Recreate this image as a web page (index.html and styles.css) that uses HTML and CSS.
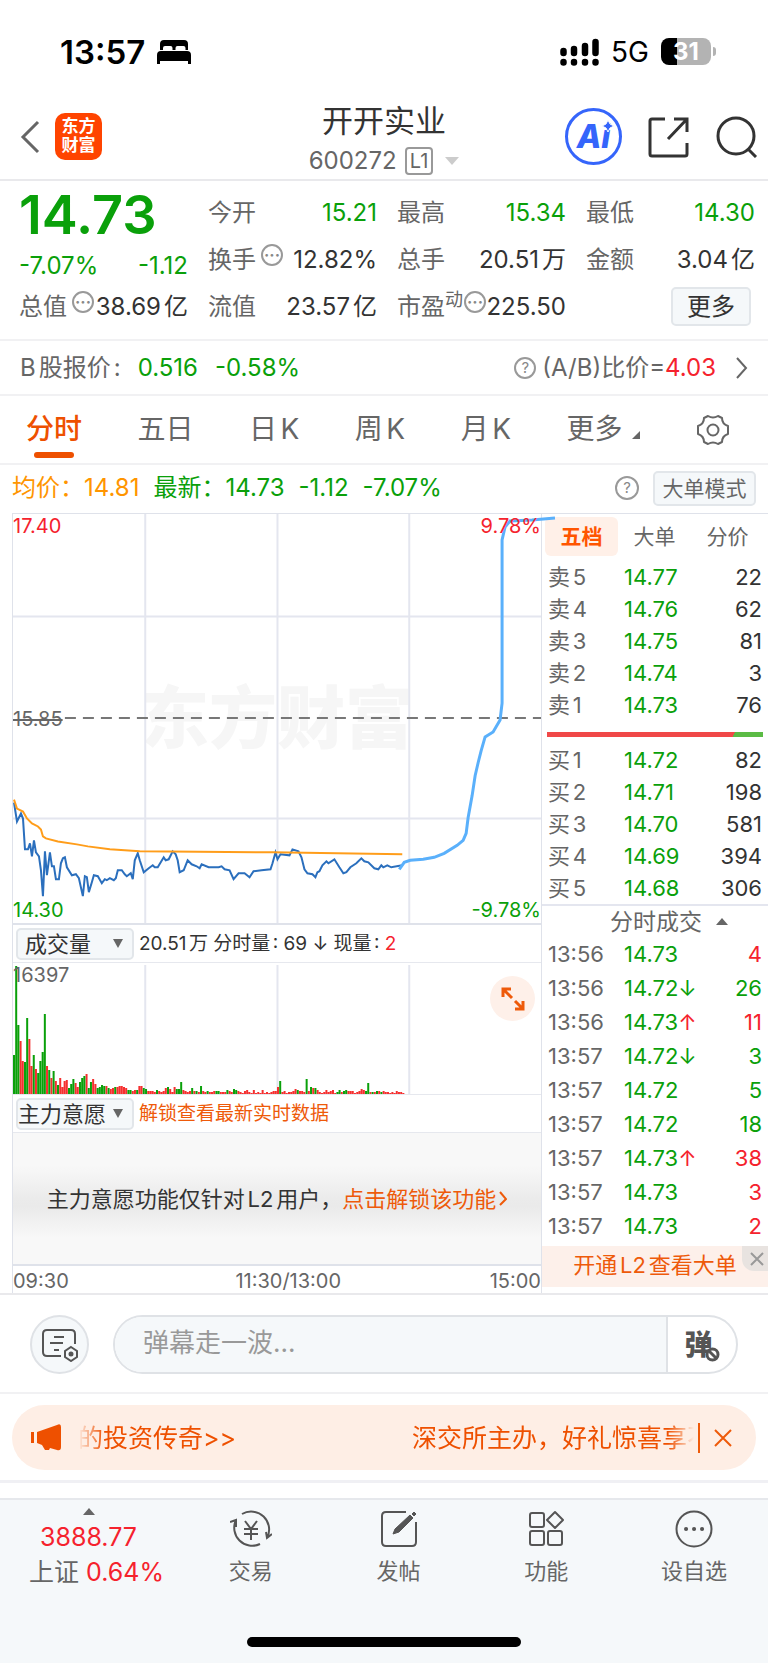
FILE: index.html
```html
<!DOCTYPE html>
<html lang="zh-CN">
<head>
    <meta charset="UTF-8">
    <meta name="viewport" content="width=device-width, initial-scale=1.0">
    <title>开开实业 600272</title>
    <link rel="stylesheet" href="styles.css">
</head>
<body>
    <div class="status-bar">
        <div class="status-left">
            <span class="clock">13:57</span>
            <svg width="34" height="26" viewBox="0 0 34 26"><path d="M3 11V5q0-4 4-4h20q4 0 4 4v6h-2.500V9q0-2-2-2h-6q-2 0-2 2v2h-3V9q0-2-2-2H8Q6 7 6 9v2zM0 25V16q0-4 4-4h26q4 0 4 4v9h-3v-3H3v3z"/></svg>
        </div>
        <div class="status-right">
            <svg width="39" height="28" viewBox="0 0 39 28"><path d="M3.500 13v2M14 11v4M25 8v7M35.500 4v11M3.500 24v.5M14 24v.5M25 24v.5M35.500 24v.5" stroke="#000" stroke-width="6.500" stroke-linecap="round"/></svg>
            <span class="network">5G</span>
            <span class="battery">31</span>
        </div>
    </div>

    <header class="header">
        <div class="header-left">
            <button class="icon-btn" aria-label="返回"><svg width="20" height="34" viewBox="0 0 20 34"><path d="M18 2 3 17l15 15" fill="none" stroke="#666" stroke-width="3"/></svg></button>
            <a class="brand" href="#">东方<br>财富</a>
        </div>
        <div class="header-title">
            <h1>开开实业</h1>
            <div class="code">600272 <span class="level">L1</span><i class="caret-down"></i></div>
        </div>
        <div class="header-right">
            <button class="icon-btn ai" aria-label="AI"><span>Ai</span><svg class="spark" width="14" height="14" viewBox="0 0 14 14"><path d="M7 1 9 5l4 2-4 2-2 4-2-4-4-2 4-2z" fill="#3565fb" stroke="#fff"/></svg></button>
            <button class="icon-btn" aria-label="分享"><svg width="42" height="42" viewBox="0 0 42 42" fill="none" stroke="#333" stroke-width="3"><path d="M17 3H4q-2 0-2 2v33q0 2 2 2h33q2 0 2-2V27M26 3h13v13M39 3 20 23"/></svg></button>
            <button class="icon-btn" aria-label="搜索"><svg width="42" height="42" viewBox="0 0 42 42" fill="none" stroke="#333" stroke-width="3"><circle cx="20" cy="20" r="18"/><path d="m32 33 8 8"/></svg></button>
        </div>
    </header>

    <section class="quote">
        <div class="price">14.73</div>
        <div class="cell"><span>今开</span><b class="green">15.21</b></div>
        <div class="cell"><span>最高</span><b class="green">15.34</b></div>
        <div class="cell"><span>最低</span><b class="green">14.30</b></div>
        <div class="cell change"><b class="green">-7.07%</b><b class="green">-1.12</b></div>
        <div class="cell"><span>换手<i class="dots">···</i></span><b>12.82%</b></div>
        <div class="cell"><span>总手</span><b>20.51万</b></div>
        <div class="cell"><span>金额</span><b>3.04亿</b></div>
        <div class="cell"><span>总值<i class="dots">···</i></span><b>38.69亿</b></div>
        <div class="cell"><span>流值</span><b>23.57亿</b></div>
        <div class="cell"><span>市盈<sup>动</sup><i class="dots">···</i></span><b>225.50</b></div>
        <div class="cell more"><button class="box-btn more-btn">更多</button></div>
    </section>

    <section class="b-share">
        <span>B股报价:</span>
        <span class="green">0.516</span>
        <span class="green">-0.58%</span>
        <a href="#" class="ratio"><i class="help">?</i><span>(A/B)比价=<em class="red">4.03</em></span><svg width="12" height="22" viewBox="0 0 12 22"><path d="m1 1 9 10-9 10" fill="none" stroke="#666" stroke-width="2"/></svg></a>
    </section>

    <nav class="tabs">
        <a href="#" class="active">分时</a>
        <a href="#">五日</a>
        <a href="#">日K</a>
        <a href="#">周K</a>
        <a href="#">月K</a>
        <a href="#" class="corner">更多</a>
        <button class="icon-btn" aria-label="设置"><svg width="34" height="32" viewBox="0 0 34 32" fill="none" stroke="#666" stroke-width="2"><path d="M12 2q5 3 10 0l4 2q0 6 6 8v8q-6 2-6 8l-4 2q-5-3-10 0l-4-2q0-6-6-8v-8q6-2 6-8z" stroke-linejoin="round"/><circle cx="17" cy="16" r="5.500"/></svg></button>
    </nav>

    <div class="summary">
        <span class="orange">均价：14.81</span>
        <span class="green">最新：14.73</span>
        <span class="green">-1.12</span>
        <span class="green">-7.07%</span>
        <i class="help">?</i>
        <button class="box-btn mode-btn">大单模式</button>
    </div>

    <main class="board">
        <div class="charts">
            <div class="price-chart">
                <div class="watermark">东方财富</div>
                <svg class="plot" viewBox="0 0 529 411" preserveAspectRatio="none">
                    <path class="grid" d="M132.500 0v411M265 0v411M397 0v411M0 103h529M0 306h529"/>
                    <path class="base" d="M52 205h477"/>
                    <polyline class="line-price" points="1,290 4,309 8,301 10,306 12,337 15,337 17,331 19,344 21,328 23,340 26,344 28,358 30,384 32,339 34,363 37,340 39,354 41,354 43,367 46,367 48,351 50,346 52,345 54,355 59,363 63,362 66,366 70,384 72,364 74,365 76,380 79,370 81,363 85,364 89,371 92,367 94,368 97,366 101,368 103,366 105,358 109,358 112,362 114,364 118,361 120,367 122,348 125,341 127,348 131,360 136,356 140,353 142,355 145,355 151,345 153,348 156,347 160,339 163,342 165,348 167,360 171,358 175,348 179,352 184,354 187,356 189,352 196,355 206,355 209,354 212,357 217,358 221,367 226,361 232,361 237,365 241,359 249,358 258,357 260,351 263,340 265,347 268,342 277,343 280,337 286,339 289,345 292,357 295,361 300,362 303,365 305,360 307,359 310,353 314,349 316,351 322,347 327,355 331,361 334,360 338,355 344,351 349,346 352,349 356,350 362,356 366,357 369,353 371,355 375,353 379,355 390,353"/>
                    <polyline class="line-avg" points="1,287 4,296 10,299 14,306 19,311 25,314 28,317 30,324 33,326 45,329 64,332 75,334 97,337 127,339 260,340 390,342"/>
                    <path class="line-hand" d="M387 357 392 350 398 348 411 347 422 345 432 341 445 333 451 328 454 321 456 305 460 283 463 263 466 250 469 238 473 224 481 219 488 207 490 190 490 126 490 26 493 13 498 7 520 6 543 4"/>
                </svg>
                <span class="mark top-left red">17.40</span>
                <span class="mark top-right red">9.78%</span>
                <span class="mark middle">15.85</span>
                <span class="mark bottom-left green">14.30</span>
                <span class="mark bottom-right green">-9.78%</span>
            </div>
            <div class="toolbar">
                <select class="picker" aria-label="指标一"><option>成交量</option></select>
                <span>20.51万 分时量: 69 ↓ 现量: <em class="red">2</em></span>
            </div>
            <div class="volume-chart">
                <svg class="plot" viewBox="0 0 529 131" preserveAspectRatio="none">
                    <path class="grid" d="M132.500 2v129M265 2v129M397 2v129"/>
                    <path id="volumeUp" fill="#f52f2f"/>
                    <path id="volumeDown" fill="#0aa00a"/>
                </svg>
                <span class="mark top-left">16397</span>
                <button class="icon-btn expand" aria-label="放大"><svg width="24" height="24" viewBox="0 0 24 24" fill="none" stroke="#ee5a0a" stroke-width="3"><path d="M10 2H2v8M2 2l9 9M14 22h8v-8M22 22l-8-8"/></svg></button>
            </div>
            <div class="toolbar">
                <select class="picker wide" aria-label="指标二"><option>主力意愿</option></select>
                <a href="#" class="unlock">解锁查看最新实时数据</a>
            </div>
            <div class="locked">主力意愿功能仅针对L2用户，<a href="#">点击解锁该功能<svg width="8" height="15" viewBox="0 0 8 15"><path d="m1 1 6 7-6 6" fill="none" stroke="#ee5a0a" stroke-width="2"/></svg></a></div>
            <div class="axis"><span>09:30</span><span>11:30/13:00</span><span>15:00</span></div>
        </div>

        <aside class="depth">
            <div class="depth-tabs">
                <button class="active">五档</button>
                <button>大单</button>
                <button>分价</button>
            </div>
            <table class="orders">
                <tr><th>卖5</th><td class="green">14.77</td><td>22</td></tr>
                <tr><th>卖4</th><td class="green">14.76</td><td>62</td></tr>
                <tr><th>卖3</th><td class="green">14.75</td><td>81</td></tr>
                <tr><th>卖2</th><td class="green">14.74</td><td>3</td></tr>
                <tr><th>卖1</th><td class="green">14.73</td><td>76</td></tr>
            </table>
            <div class="balance"></div>
            <table class="orders">
                <tr><th>买1</th><td class="green">14.72</td><td>82</td></tr>
                <tr><th>买2</th><td class="green">14.71</td><td>198</td></tr>
                <tr><th>买3</th><td class="green">14.70</td><td>581</td></tr>
                <tr><th>买4</th><td class="green">14.69</td><td>394</td></tr>
                <tr><th>买5</th><td class="green">14.68</td><td>306</td></tr>
            </table>
            <button class="deals-title">分时成交<i class="caret-up"></i></button>
            <table class="orders deals">
                <tr><th>13:56</th><td class="green">14.73</td><td class="red">4</td></tr>
                <tr><th>13:56</th><td class="green">14.72<i>↓</i></td><td class="green">26</td></tr>
                <tr><th>13:56</th><td class="green">14.73<i class="red">↑</i></td><td class="red">11</td></tr>
                <tr><th>13:57</th><td class="green">14.72<i>↓</i></td><td class="green">3</td></tr>
                <tr><th>13:57</th><td class="green">14.72</td><td class="green">5</td></tr>
                <tr><th>13:57</th><td class="green">14.72</td><td class="green">18</td></tr>
                <tr><th>13:57</th><td class="green">14.73<i class="red">↑</i></td><td class="red">38</td></tr>
                <tr><th>13:57</th><td class="green">14.73</td><td class="red">3</td></tr>
                <tr><th>13:57</th><td class="green">14.73</td><td class="red">2</td></tr>
            </table>
            <div class="promo">
                <a href="#">开通L2查看大单</a>
                <button class="promo-close" aria-label="关闭"><svg width="14" height="14" viewBox="0 0 14 14"><path d="m1 1 12 12M13 1 1 13" stroke="#999" stroke-width="2"/></svg></button>
            </div>
        </aside>
    </main>

    <section class="barrage">
        <button class="round-btn" aria-label="弹幕设置"><svg width="38" height="34" viewBox="0 0 38 34" fill="none" stroke="#555" stroke-width="2"><path d="M20 28H6q-4 0-4-4V6q0-4 4-4h24q4 0 4 4v10M13 9h10M9 15h13M13 22h5"/><path d="m30 19 6 4v6l-6 4-6-4v-6z"/><circle cx="30" cy="26" r="1.500" fill="#555"/></svg></button>
        <div class="barrage-box">
            <input type="text" placeholder="弹幕走一波..." aria-label="弹幕">
            <button class="barrage-off" aria-label="关闭弹幕"><span>弹</span><svg width="15" height="15" viewBox="0 0 15 15" fill="#fff" stroke="#555" stroke-width="3"><circle cx="7.500" cy="7.500" r="5.500"/><path d="m4 4 7 7"/></svg></button>
        </div>
    </section>

    <section class="notice-wrap">
        <div class="notice">
            <svg width="31" height="27" viewBox="0 0 31 27" fill="#ee5000"><path d="M0 8h3v11H0zM6 8 26 1q4-2 4 2v20q0 4-4 3l-7-2-1 2h-4l-3-5-5-2z"/></svg>
            <div class="marquee"><span>的投资传奇&gt;&gt;</span><span>深交所主办，好礼惊喜享不</span></div>
            <button class="icon-btn" aria-label="关闭公告"><svg width="18" height="18" viewBox="0 0 18 18"><path d="m1 1 16 16M17 1 1 17" stroke="#ee5a0a" stroke-width="2"/></svg></button>
        </div>
    </section>

    <footer class="dock">
        <nav class="dock-items">
            <a href="#" class="index"><i class="caret-up"></i><span class="red">3888.77</span><span>上证 <em class="red">0.64%</em></span></a>
            <a href="#"><svg width="42" height="38" viewBox="0 0 42 38" fill="none" stroke="#555" stroke-width="2"><path d="M12 4a18 18 0 0 1 25 24M30 34A18 18 0 0 1 6 10M0 12l6-2v7M42 24l-5 4-1-6M15 11l6 8 6-8M21 19v11M14 19h14M14 24h14"/></svg>交易</a>
            <a href="#"><svg width="38" height="38" viewBox="0 0 38 38" fill="none" stroke="#555" stroke-width="2"><path d="M26 2H6Q2 2 2 6v26q0 4 4 4h26q4 0 4-4V12"/><path d="m13 24 2-5L30 5l3 3-14 14zM32 4l2-2 2 2-2 2z" fill="#555" stroke-width="1"/></svg>发帖</a>
            <a href="#"><svg width="36" height="38" viewBox="0 0 36 38" fill="none" stroke="#555" stroke-width="2"><rect x="2" y="3" width="14" height="14" rx="2"/><rect x="2" y="21" width="14" height="14" rx="2"/><rect x="20" y="21" width="14" height="14" rx="2"/><path d="m27 2 8 8-8 8-8-8z" stroke-linejoin="round"/></svg>功能</a>
            <a href="#"><svg width="38" height="38" viewBox="0 0 38 38" fill="none" stroke="#555" stroke-width="2"><circle cx="19" cy="19" r="17.500"/><path d="M11 19h.1M19 19h.1M27 19h.1" stroke-width="4" stroke-linecap="round"/></svg>设自选</a>
        </nav>
        <div class="home-bar"></div>
    </footer>

    <script>
        // one bar per minute, negative = price fell
        const volume = [
            -39, -128, -69, 53, 33, -32, -76, 55, 28, -39, 25, -21, -33, -42, -80, 28, -24, 16, -23, 13,
            -9, 16, 7, 13, 14, -6, -10, -15, 11, 7, -12, -16, -18, 20, -6, -12, 15, 10, -6, -7,
            -9, -8, 8, -6, 5, 6, -7, 7, 8, 8, 7, 6, -4, -4, 3, 4, -4, 8, 8, -6,
            -5, 3, 3, 3, 2, -4, 3, 2, 3, 6, -7, 5, 2, 7, -5, -5, -12, 4, 3, 2,
            3, -6, 3, -3, 2, -8, 3, 2, -3, 2, 2, 3, -3, -3, 2, 2, 2, -4, 3, 2,
            -5, -4, 3, 2, 1, 3, 4, 2, 1, 4, 1, 2, 1, 4, 1, 2, 1, 2, 3, 3,
            7, -13, 2, 3, 1, 2, 2, 3, 5, -4, 3, 3, 2, -15, 3, -7, 6, -6, 4, 2,
            1, 2, 4, 2, 3, 4, 1, -2, -4, 2, -3, -4, 3, 3, 3, 1, 2, 3, 5, 4,
            -3, -11, 2, -2, 2, -3, 3, -2, 3, 2, 2, 1, 2, 1, 3, 2, 2, 1
        ];

        function bars(list, sign) {
            return list.map((v, i) => {
                if (Math.sign(v) !== sign) return '';
                const x = (i * 529 / 240).toFixed(1);
                return `M${x} 131v${-Math.abs(v)}h2v${Math.abs(v)}z`;
            }).join('');
        }

        document.getElementById('volumeUp').setAttribute('d', bars(volume, 1));
        document.getElementById('volumeDown').setAttribute('d', bars(volume, -1));
    </script>
</body>
</html>
```
FILE: styles.css
```css
* {
    box-sizing: border-box;
}

body {
    margin: 0;
    background-color: #fff;
    color: #666;
    font-family: Inter, "Noto Sans CJK SC", sans-serif;
    font-size: 24px;
    line-height: 32px;
    text-autospace: normal;
}

button,
input,
select {
    font: inherit;
    color: inherit;
    margin: 0;
    padding: 0;
    border: none;
    background: none;
}

a {
    color: inherit;
    text-decoration: none;
}

i,
em {
    font-style: normal;
}

svg {
    display: block;
    flex-shrink: 0;
}

.green,
.cell .green,
.orders .green {
    color: #0aa00a;
}

.red,
.orders .red {
    color: #f5222d;
}

.orange {
    color: #ff9500;
}

.icon-btn {
    display: flex;
    align-items: center;
    justify-content: center;
}

.caret-down,
.caret-up {
    display: inline-block;
    border: 7px solid transparent;
}

.caret-down {
    border-top: 8px solid #ccc;
    border-bottom: 0;
}

.caret-up {
    border-width: 0 6px 7px;
    border-bottom-color: #666;
}

/* status bar */
.status-bar {
    display: flex;
    justify-content: space-between;
    align-items: center;
    height: 94px;
    padding: 9px 57px 0 60px;
    color: #000;
}

.status-left,
.status-right {
    display: flex;
    align-items: center;
    gap: 12px;
}

.clock {
    font-size: 33px;
    font-weight: 600;
}

.network {
    font-size: 28px;
}

.battery {
    position: relative;
    width: 50px;
    height: 27px;
    border-radius: 8px;
    background: linear-gradient(to right, #000 31%, #b3b3b3 31%);
    color: #fff;
    font-size: 24px;
    font-weight: 700;
    line-height: 27px;
    text-align: center;
}

.battery::after {
    content: "";
    position: absolute;
    left: 52px;
    top: 9px;
    width: 3px;
    height: 9px;
    border-radius: 0 4px 4px 0;
    background-color: #b3b3b3;
}

/* header */
.header {
    display: grid;
    grid-template-columns: minmax(0, 1fr) auto minmax(0, 1fr);
    align-items: center;
    height: 87px;
    padding: 0 10px;
    border-bottom: 2px solid #e9e9ec;
}

.header-left,
.header-right {
    display: flex;
    align-items: center;
}

.header-left {
    gap: 15px;
    padding-left: 10px;
}

.header-right {
    justify-content: flex-end;
    gap: 26px;
}

.brand {
    width: 47px;
    height: 47px;
    padding-top: 4px;
    border-radius: 10px;
    background-color: #ff4400;
    color: #fff;
    font-size: 17px;
    font-weight: 700;
    line-height: 19px;
    text-align: center;
}

.header-title {
    padding-top: 4px;
    text-align: center;
}

h1 {
    margin: 0 0 4px;
    color: #333;
    font-size: 31px;
    font-weight: 400;
    line-height: 40px;
}

.code {
    display: flex;
    align-items: center;
    gap: 8px;
}

.level {
    padding: 0 3px;
    border: 2px solid #999;
    border-radius: 4px;
    font-size: 20px;
    line-height: 24px;
}

.code .caret-down {
    margin-left: 4px;
}

.ai {
    position: relative;
    width: 57px;
    height: 57px;
    border: 3px solid #3565fb;
    border-radius: 50%;
    color: #3565fb;
    font-size: 32px;
    font-style: italic;
    font-weight: 800;
}

.spark {
    position: absolute;
    right: 4px;
    top: 8px;
}

/* quote */
.quote {
    display: grid;
    grid-template-columns: repeat(4, 1fr);
    grid-auto-rows: 47px;
    column-gap: 20px;
    padding: 8px 13px 9px 19px;
    border-bottom: 2px solid #f1f1f3;
}

.price {
    align-self: center;
    padding-top: 4px;
    color: #0aa00a;
    font-size: 54px;
    font-weight: 600;
}

.cell {
    display: flex;
    align-items: center;
    justify-content: space-between;
    white-space: nowrap;
}

.cell b {
    color: #333;
    font-weight: 400;
}

.cell.change {
    padding-top: 12px;
}

.cell span {
    display: flex;
}

.cell sup {
    font-size: 18px;
    line-height: 18px;
}

.dots {
    width: 22px;
    height: 22px;
    margin-left: 5px;
    border: 2px solid #999;
    border-radius: 50%;
    color: #888;
    font-size: 16px;
    font-weight: 700;
    line-height: 18px;
    text-align: center;
}

.cell sup + .dots {
    margin-left: 1px;
}

.cell.more {
    justify-content: flex-end;
    padding-right: 4px;
}

.box-btn {
    border: 2px solid #e2e6ea;
    border-radius: 5px;
    background-color: #f5f8fa;
}

.more-btn {
    width: 80px;
    height: 39px;
    color: #333;
}

/* b share */
.b-share {
    display: flex;
    align-items: center;
    gap: 17px;
    height: 55px;
    padding: 0 20px;
    border-bottom: 2px solid #f1f1f3;
}

.ratio {
    display: flex;
    align-items: center;
    margin-left: auto;
}

.ratio svg {
    margin-left: 20px;
}

.help {
    width: 22px;
    height: 22px;
    border: 2px solid #999;
    border-radius: 50%;
    color: #888;
    font-size: 15px;
    line-height: 18px;
    text-align: center;
}

.ratio .help {
    margin-right: 6px;
}

/* period tabs */
.tabs {
    display: flex;
    justify-content: space-between;
    height: 69px;
    padding: 0 38px 0 26px;
    border-bottom: 2px solid #f1f1f3;
    font-size: 28px;
    line-height: 67px;
}

.tabs .active {
    position: relative;
    color: #ee5000;
    font-weight: 500;
}

.tabs .active::after {
    content: "";
    position: absolute;
    left: 50%;
    bottom: 5px;
    width: 40px;
    height: 6px;
    margin-left: -20px;
    border-radius: 3px;
    background-color: #ee5000;
}

.tabs .corner::after {
    content: "";
    display: inline-block;
    margin-left: 10px;
    border-left: 8px solid transparent;
    border-bottom: 8px solid #666;
}

/* summary */
.summary {
    display: flex;
    align-items: center;
    gap: 14px;
    height: 48px;
    padding: 0 12px 2px;
}

.summary .help {
    width: 24px;
    height: 24px;
    margin-left: auto;
    line-height: 20px;
}

.mode-btn {
    width: 103px;
    height: 35px;
    font-size: 21px;
}

/* board */
.board {
    display: grid;
    grid-template-columns: minmax(0, 530fr) minmax(0, 226fr);
    padding-left: 12px;
    border-bottom: 2px solid #e9e9ec;
}

.charts {
    border: 1px solid #dfe2ea;
    border-bottom: 0;
    font-size: 20px;
}

.price-chart,
.volume-chart {
    position: relative;
    border-bottom: 2px solid #dfe2ea;
}

.price-chart {
    height: 411px;
}

.volume-chart {
    height: 132px;
    border-bottom: 1px solid #e6e8ee;
}

.plot {
    position: relative;
    width: 100%;
    height: 100%;
    overflow: visible;
    z-index: 1;
}

.plot .grid,
.plot .base,
.line-price,
.line-avg,
.line-hand {
    fill: none;
    stroke-width: 2;
    vector-effect: non-scaling-stroke;
}

.plot .grid {
    stroke: #e4e6ef;
}

.plot .base {
    stroke: #777;
    stroke-dasharray: 11 7;
}

.line-price {
    stroke: #2b6fbd;
}

.line-avg {
    stroke: #ff9d1a;
}

.line-hand {
    stroke: #5ab0fb;
    stroke-width: 3;
}

.watermark {
    position: absolute;
    left: 0;
    right: 0;
    top: 160px;
    color: #f6f6f6;
    font-size: 68px;
    font-weight: 900;
    line-height: 88px;
    text-align: center;
}

.mark {
    position: absolute;
    z-index: 1;
    line-height: 24px;
}

.top-left {
    left: 0;
    top: 0;
}

.top-right {
    right: 0;
    top: 0;
}

.middle {
    left: 0;
    top: 193px;
    text-decoration: line-through;
}

.bottom-left {
    left: 0;
    bottom: 1px;
}

.bottom-right {
    right: 0;
    bottom: 1px;
}

.expand {
    position: absolute;
    right: 6px;
    top: 13px;
    z-index: 1;
    width: 45px;
    height: 45px;
    border-radius: 50%;
    background-color: #fef0e9;
}

.toolbar {
    display: flex;
    align-items: center;
    gap: 5px;
    height: 38px;
    padding-left: 3px;
    border-bottom: 1px solid #e6e8ee;
    color: #333;
    font-size: 19px;
}

.picker {
    width: 118px;
    height: 32px;
    padding-left: 7px;
    border: 2px solid #e2e6ea;
    border-radius: 5px;
    appearance: none;
    background: #f5f8fa url("data:image/svg+xml,%3Csvg xmlns='http://www.w3.org/2000/svg' width='10' height='9'%3E%3Cpath d='M0 0h10L5 9z' fill='%23666'/%3E%3C/svg%3E") no-repeat right 9px center;
    font-size: 22px;
    line-height: 28px;
}

.picker.wide {
    padding-left: 0;
}

.unlock,
.locked a {
    color: #ee5a0a;
}

.locked {
    display: flex;
    align-items: center;
    justify-content: center;
    height: 133px;
    border-bottom: 2px solid #dfe2ea;
    background: linear-gradient(#f8f8f8 25%, #ebebeb 50%, #eaeaea 56%, #f8f8f8 80%);
    color: #333;
    font-size: 22px;
    white-space: nowrap;
}

.locked a {
    display: flex;
    align-items: center;
    gap: 3px;
}

.axis {
    display: flex;
    justify-content: space-between;
    height: 27px;
    line-height: 30px;
}

.axis span:nth-child(2) {
    margin-left: 18px;
}

/* depth */
.depth {
    border-top: 1px solid #dfe2ea;
    font-size: 22px;
}

.depth-tabs {
    display: grid;
    grid-template-columns: repeat(3, 1fr);
    height: 47px;
    padding: 3px 4px 5px 3px;
}

.depth-tabs button {
    border-radius: 6px;
    font-size: 21px;
}

.depth-tabs .active {
    background-color: #fff0e8;
    color: #ff5500;
    font-weight: 700;
}

.orders {
    width: 100%;
    border-collapse: collapse;
    table-layout: fixed;
}

.orders tr {
    height: 32px;
}

.orders th,
.orders td {
    padding: 0;
    line-height: 32px;
}

.orders th {
    width: 82px;
    padding-left: 6px;
    font-weight: 400;
    text-align: left;
}

.orders td {
    color: #333;
}

.orders td:last-child {
    width: 60px;
    padding-right: 6px;
    text-align: right;
}

.balance {
    height: 5px;
    margin: 11px 5px 7px;
    background: linear-gradient(120deg, #f04848 86%, #5bbb45 86%);
}

.deals-title {
    display: flex;
    align-items: center;
    justify-content: center;
    gap: 14px;
    width: 100%;
    height: 33px;
    padding-left: 28px;
    border-top: 2px solid #e4e6ef;
    font-size: 23px;
}

.deals {
    margin-bottom: 3px;
}

.deals tr {
    height: 34px;
}

.promo {
    position: relative;
    height: 41px;
    background-color: #fdf0ea;
    color: #ee5a0a;
    line-height: 38px;
    text-align: center;
}

.promo-close {
    position: absolute;
    right: 0;
    top: 0;
    width: 26px;
    height: 25px;
    padding-left: 8px;
    border-radius: 0 0 0 12px;
    background-color: #e8e3e0;
}

/* barrage */
.barrage {
    display: flex;
    gap: 24px;
    padding: 20px 30px 18px;
    border-bottom: 2px solid #f1f1f3;
}

.round-btn {
    display: flex;
    align-items: center;
    justify-content: center;
    width: 59px;
    height: 59px;
    border: 2px solid #dfe2e6;
    border-radius: 50%;
    background-color: #f5f8fa;
}

.barrage-box {
    display: flex;
    flex: 1;
    overflow: hidden;
    border: 2px solid #dfe2e6;
    border-radius: 30px;
}

.barrage-box input {
    flex: 1;
    min-width: 0;
    padding: 0 28px 4px;
    background-color: #f5f8fa;
    font-size: 26px;
    text-autospace: no-autospace;
}

.barrage-box input::placeholder {
    color: #999;
}

.barrage-off {
    display: flex;
    align-items: center;
    justify-content: center;
    width: 70px;
    border-left: 2px solid #dfe2e6;
    color: #555;
    font-size: 28px;
    font-weight: 900;
}

.barrage-off svg {
    align-self: flex-end;
    margin: 0 0 10px -8px;
}

/* notice */
.notice-wrap {
    padding: 11px 12px 10px;
    border-bottom: 3px solid #f0f0f4;
}

.notice {
    display: flex;
    align-items: center;
    height: 65px;
    padding: 0 24px 0 19px;
    border-radius: 33px;
    background-color: #feeee5;
    color: #ee5000;
    font-size: 25px;
}

.marquee {
    display: flex;
    flex: 1;
    gap: 176px;
    min-width: 0;
    height: 30px;
    margin: 0 14px 0 16px;
    overflow: hidden;
    border-right: 2px solid #ee5a0a;
    line-height: 30px;
    white-space: nowrap;
    -webkit-mask-image: linear-gradient(to right, transparent 0, #000 26px);
    mask-image: linear-gradient(to right, transparent 0, #000 26px);
}

.marquee span:last-child {
    overflow: hidden;
    padding-right: 6px;
    -webkit-mask-image: linear-gradient(to left, transparent 4px, #000 30px);
    mask-image: linear-gradient(to left, transparent 4px, #000 30px);
}

/* dock */
.dock {
    margin-top: 15px;
    padding-bottom: 16px;
    border-top: 2px solid #e6e8ec;
    background-color: #f5f8fa;
}

.dock-items {
    display: grid;
    grid-template-columns: 177px repeat(4, 1fr);
    height: 137px;
}

.dock-items a {
    display: flex;
    flex-direction: column;
    align-items: center;
    gap: 7px;
    padding-top: 10px;
    font-size: 22px;
}

.dock-items .index {
    gap: 3px;
    padding: 8px 0 0 16px;
    font-size: 25px;
}

.dock-items .index .red:nth-child(2) {
    padding-right: 16px;
}

.dock-items .index .caret-up {
    margin: 0 16px 3px 0;
}

.home-bar {
    width: 274px;
    height: 10px;
    margin: 0 auto;
    border-radius: 5px;
    background-color: #000;
}
```
